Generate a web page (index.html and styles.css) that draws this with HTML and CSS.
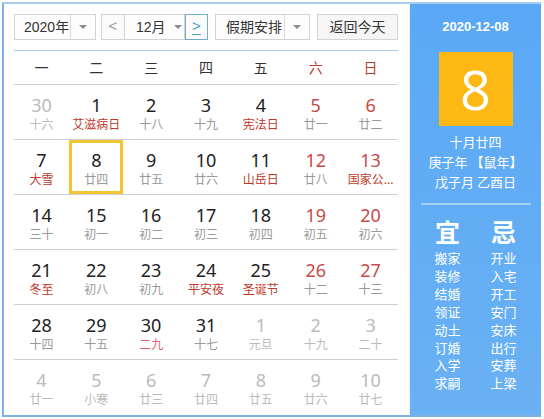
FILE: index.html
```html
<!DOCTYPE html>
<html lang="zh">
<head>
<meta charset="utf-8">
<link rel="stylesheet" href="styles.css">
</head>
<body>
<div class="frame">
  <div class="main">
    <div class="toolbar">
      <div class="select year"><span class="sel-text">2020年</span><span class="sel-arrow div"></span></div>
      <div class="nav">
        <div class="btn-arrow prev">&lt;</div>
        <div class="select month"><span class="sel-text">12月</span><span class="sel-arrow"></span></div>
        <div class="btn-arrow next"><span class="u">&gt;</span></div>
      </div>
      <div class="select holiday"><span class="sel-text">假期安排</span><span class="sel-arrow div"></span></div>
      <div class="btn-today">返回今天</div>
    </div>
    <div class="grid">
      <div class="wk">一</div><div class="wk">二</div><div class="wk">三</div><div class="wk">四</div><div class="wk">五</div><div class="wk we">六</div><div class="wk we">日</div>

      <div class="cell out"><span class="n">30</span><span class="l">十六</span></div>
      <div class="cell"><span class="n">1</span><span class="l fest">艾滋病日</span></div>
      <div class="cell"><span class="n">2</span><span class="l">十八</span></div>
      <div class="cell"><span class="n">3</span><span class="l">十九</span></div>
      <div class="cell"><span class="n">4</span><span class="l fest">宪法日</span></div>
      <div class="cell we"><span class="n">5</span><span class="l">廿一</span></div>
      <div class="cell we"><span class="n">6</span><span class="l">廿二</span></div>

      <div class="cell"><span class="n">7</span><span class="l fest">大雪</span></div>
      <div class="cell sel"><span class="n">8</span><span class="l">廿四</span></div>
      <div class="cell"><span class="n">9</span><span class="l">廿五</span></div>
      <div class="cell"><span class="n">10</span><span class="l">廿六</span></div>
      <div class="cell"><span class="n">11</span><span class="l fest">山岳日</span></div>
      <div class="cell we"><span class="n">12</span><span class="l">廿八</span></div>
      <div class="cell we"><span class="n">13</span><span class="l fest">国家公...</span></div>

      <div class="cell"><span class="n">14</span><span class="l">三十</span></div>
      <div class="cell"><span class="n">15</span><span class="l">初一</span></div>
      <div class="cell"><span class="n">16</span><span class="l">初二</span></div>
      <div class="cell"><span class="n">17</span><span class="l">初三</span></div>
      <div class="cell"><span class="n">18</span><span class="l">初四</span></div>
      <div class="cell we"><span class="n">19</span><span class="l">初五</span></div>
      <div class="cell we"><span class="n">20</span><span class="l">初六</span></div>

      <div class="cell"><span class="n">21</span><span class="l fest">冬至</span></div>
      <div class="cell"><span class="n">22</span><span class="l">初八</span></div>
      <div class="cell"><span class="n">23</span><span class="l">初九</span></div>
      <div class="cell"><span class="n">24</span><span class="l fest">平安夜</span></div>
      <div class="cell"><span class="n">25</span><span class="l fest">圣诞节</span></div>
      <div class="cell we"><span class="n">26</span><span class="l">十二</span></div>
      <div class="cell we"><span class="n">27</span><span class="l">十三</span></div>

      <div class="cell"><span class="n">28</span><span class="l">十四</span></div>
      <div class="cell"><span class="n">29</span><span class="l">十五</span></div>
      <div class="cell"><span class="n">30</span><span class="l fest light">二九</span></div>
      <div class="cell"><span class="n">31</span><span class="l">十七</span></div>
      <div class="cell out"><span class="n">1</span><span class="l">元旦</span></div>
      <div class="cell out"><span class="n">2</span><span class="l">十九</span></div>
      <div class="cell out"><span class="n">3</span><span class="l">二十</span></div>

      <div class="cell out last"><span class="n">4</span><span class="l">廿一</span></div>
      <div class="cell out last"><span class="n">5</span><span class="l">小寒</span></div>
      <div class="cell out last"><span class="n">6</span><span class="l">廿三</span></div>
      <div class="cell out last"><span class="n">7</span><span class="l">廿四</span></div>
      <div class="cell out last"><span class="n">8</span><span class="l">廿五</span></div>
      <div class="cell out last"><span class="n">9</span><span class="l">廿六</span></div>
      <div class="cell out last"><span class="n">10</span><span class="l">廿七</span></div>
    </div>
  </div>
  <div class="side">
    <div class="s-date">2020-12-08</div>
    <div class="s-day">8</div>
    <div class="s-line first">十月廿四</div>
    <div class="s-line">庚子年 【鼠年】</div>
    <div class="s-line">戊子月 乙酉日</div>
    <div class="s-divider"></div>
    <div class="s-cols">
      <div class="s-col">
        <div class="s-head">宜</div>
        <div class="s-item">搬家</div>
        <div class="s-item">装修</div>
        <div class="s-item">结婚</div>
        <div class="s-item">领证</div>
        <div class="s-item">动土</div>
        <div class="s-item">订婚</div>
        <div class="s-item">入学</div>
        <div class="s-item">求嗣</div>
      </div>
      <div class="s-col">
        <div class="s-head">忌</div>
        <div class="s-item">开业</div>
        <div class="s-item">入宅</div>
        <div class="s-item">开工</div>
        <div class="s-item">安门</div>
        <div class="s-item">安床</div>
        <div class="s-item">出行</div>
        <div class="s-item">安葬</div>
        <div class="s-item">上梁</div>
      </div>
    </div>
  </div>
</div>
</body>
</html>
```

FILE: styles.css
```css
* { box-sizing: border-box; }
html, body { margin: 0; padding: 0; background: #ffffff; }
body {
  width: 544px;
  height: 419px;
  padding: 2px 3px 2px 2px;
  font-family: "Noto Sans", "Noto Sans CJK SC", sans-serif;
  color: #333;
}
.frame {
  display: flex;
  width: 539px;
  height: 415px;
  border: 2px solid #7db0e4;
  border-top-color: #a9cdf0;
  border-right: none;
  background: #fff;
}
.main {
  width: 406px;
  padding: 10px 8px 0 10px;
  display: flex;
  flex-direction: column;
  border-right: 1px solid #eef3f8;
}
.toolbar {
  display: flex;
  height: 26px;
  margin-bottom: 10px;
  font-family: "Liberation Sans", "Noto Sans CJK SC", sans-serif;
  white-space: nowrap;
}
.select {
  display: flex;
  align-items: center;
  height: 26px;
  border: 1px solid #d3d3d3;
  background: #fdfdfd;
  font-size: 14px;
  color: #333;
}
.sel-text { flex: 1; padding-left: 9px; line-height: 24px; white-space: nowrap; }
.sel-arrow {
  flex: none;
  width: 25px;
  height: 24px;
  position: relative;
}
.sel-arrow.div { border-left: 1px solid #dcdcdc; }
.sel-arrow::after {
  content: "";
  position: absolute;
  left: 8px;
  top: 10px;
  border-left: 4px solid transparent;
  border-right: 4px solid transparent;
  border-top: 4px solid #8a8a8a;
}
.year { width: 82px; }
.year .sel-text { padding-left: 9px; }
.nav { display: flex; margin-left: 5px; }
.btn-arrow {
  width: 23px;
  height: 26px;
  border: 1px solid #d3d3d3;
  background: #fbfbfb;
  color: #999;
  font-size: 15px;
  text-align: center;
  line-height: 22px;
  font-family: "Liberation Sans", sans-serif;
}
.prev { border-right: none; }
.month { width: 61px; }
.month .sel-text { padding-left: 11px; }
.next {
  border-color: #6fb1c4;
  color: #4c9ec6;
}
.next .u {
  text-decoration: underline;
  text-underline-offset: 3px;
}
.holiday { width: 95px; margin-left: 7px; }
.holiday .sel-text { padding-left: 10px; }
.btn-today {
  width: 81px;
  height: 26px;
  margin-left: 7px;
  border: 1px solid #d3d3d3;
  background: #f6f6f6;
  font-size: 14px;
  text-align: center;
  line-height: 24px;
  color: #333;
}
.grid {
  width: 384px;
  display: grid;
  grid-template-columns: repeat(7, 1fr);
  border-top: 1px solid #a8c9e8;
}
.wk {
  height: 34px;
  line-height: 33px;
  text-align: center;
  font-size: 14px;
  color: #333;
  border-bottom: 1px solid #c9d0d7;
}
.wk.we { color: #c0392b; }
.cell {
  height: 55px;
  padding-top: 9px;
  display: flex;
  flex-direction: column;
  align-items: center;
  border-bottom: 1px solid #c9d0d7;
  position: relative;
  white-space: nowrap;
}
.cell.last { border-bottom: none; }
.n { font-size: 18px; line-height: 22px; color: #222; }
.l { font-size: 12px; line-height: 18px; color: #999; }
.l.fest { color: #c0392b; }
.l.light { color: #e06070; }
.cell.we .n { color: #c84a48; }
.cell.out .n, .cell.out .l { color: #bbb; }
.cell.sel::after {
  content: "";
  position: absolute;
  left: 0;
  right: 1px;
  top: 0;
  bottom: 0;
  border: 3px solid #f2c531;
}
.side {
  width: 131px;
  background: linear-gradient(#5aa8f6, #6ab1f3);
  color: #fff;
  display: flex;
  flex-direction: column;
  align-items: center;
}
.s-date {
  margin-top: 14px;
  font-size: 13px;
  font-weight: bold;
  line-height: 18px;
  font-family: "Liberation Sans", sans-serif;
}
.s-day {
  margin-top: 16px;
  width: 74px;
  height: 74px;
  background: #fdb813;
  font-size: 54px;
  line-height: 74px;
  text-align: center;
  font-family: "Open Sans", sans-serif;
}
.s-line {
  font-size: 13px;
  line-height: 20px;
  font-family: "Noto Sans CJK SC", sans-serif;
}
.s-line.first { margin-top: 6px; }
.s-divider {
  margin-top: 11px;
  width: 110px;
  height: 2px;
  background: #a7d0f8;
}
.s-cols { display: flex; margin-top: 11px; }
.s-col {
  width: 56px;
  display: flex;
  flex-direction: column;
  align-items: center;
}
.s-head {
  font-size: 25px;
  line-height: 30px;
  font-weight: bold;
  margin-bottom: 3px;
  font-family: "Noto Sans CJK SC", sans-serif;
}
.s-item {
  font-size: 13px;
  line-height: 17.9px;
  font-family: "Noto Sans CJK SC", sans-serif;
}
```
